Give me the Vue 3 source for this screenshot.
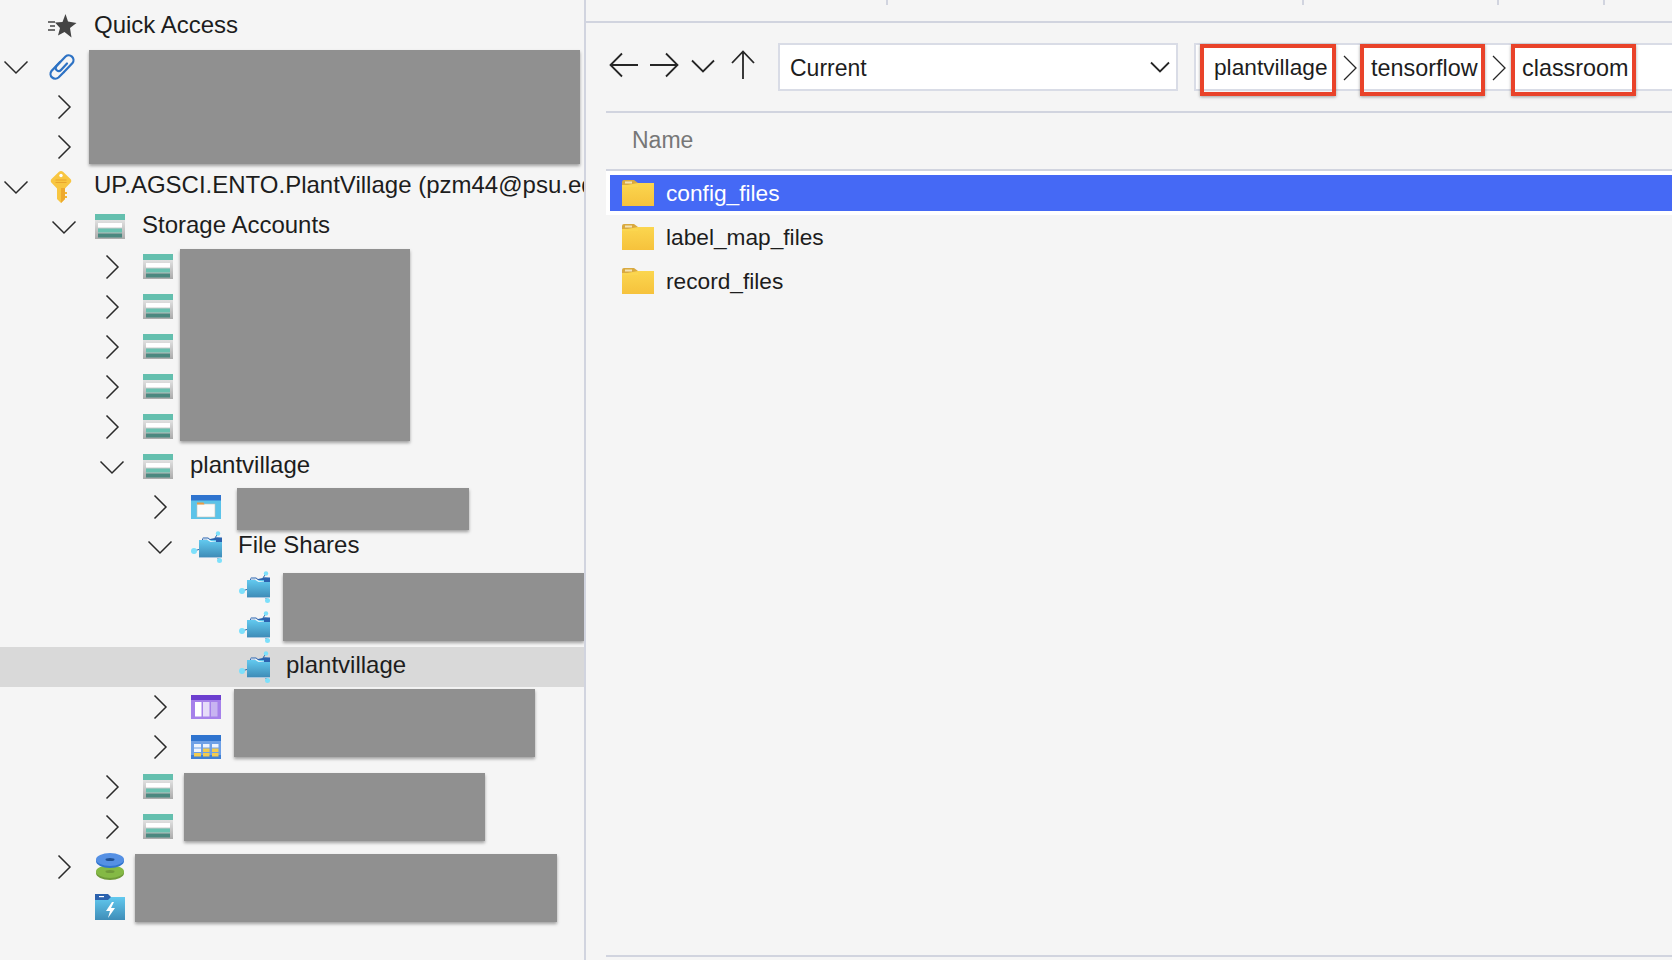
<script setup>
const rows = [
  { level: 0, icon: 'quick', label: 'Quick Access' },
  { level: 0, arrow: 'down', icon: 'link' },
  { level: 1, arrow: 'right' },
  { level: 1, arrow: 'right' },
  { level: 0, arrow: 'down', icon: 'key', label: 'UP.AGSCI.ENTO.PlantVillage (pzm44@psu.edu)' },
  { level: 1, arrow: 'down', icon: 'storage', label: 'Storage Accounts' },
  { level: 2, arrow: 'right', icon: 'storage' },
  { level: 2, arrow: 'right', icon: 'storage' },
  { level: 2, arrow: 'right', icon: 'storage' },
  { level: 2, arrow: 'right', icon: 'storage' },
  { level: 2, arrow: 'right', icon: 'storage' },
  { level: 2, arrow: 'down', icon: 'storage', label: 'plantvillage' },
  { level: 3, arrow: 'right', icon: 'blob' },
  { level: 3, arrow: 'down', icon: 'share', label: 'File Shares' },
  { level: 4, icon: 'share' },
  { level: 4, icon: 'share' },
  { level: 4, icon: 'share', label: 'plantvillage', active: true },
  { level: 3, arrow: 'right', icon: 'queue' },
  { level: 3, arrow: 'right', icon: 'table' },
  { level: 2, arrow: 'right', icon: 'storage' },
  { level: 2, arrow: 'right', icon: 'storage' },
  { level: 1, arrow: 'right', icon: 'disk' },
  { level: 1, icon: 'bolt' },
]

// grey blocks that hide account names in the screenshot
const masks = [
  { left: 89, top: 50, width: 491, height: 114 },
  { left: 180, top: 249, width: 230, height: 192 },
  { left: 237, top: 488, width: 232, height: 42 },
  { left: 283, top: 573, width: 301, height: 68 },
  { left: 234, top: 689, width: 301, height: 68 },
  { left: 184, top: 773, width: 301, height: 68 },
  { left: 135, top: 854, width: 422, height: 68 },
]

const folders = ['config_files', 'label_map_files', 'record_files']
const ticks = [886, 1302, 1497, 1603]
const crumbs = ['plantvillage', 'tensorflow', 'classroom']

const maskStyle = (m) => ({
  left: m.left + 'px',
  top: m.top + 'px',
  width: m.width + 'px',
  height: m.height + 'px',
})
</script>

<template>
  <div class="app">
    <svg class="defs" width="0" height="0">
      <defs>
        <linearGradient id="gStore" x1="0" y1="0" x2="0" y2="1">
          <stop offset="0" stop-color="#f2f2f2" />
          <stop offset="1" stop-color="#ababab" />
        </linearGradient>
        <linearGradient id="gShare" x1="0" y1="0" x2="0" y2="1">
          <stop offset="0" stop-color="#62c9ef" />
          <stop offset="1" stop-color="#3f8db8" />
        </linearGradient>
        <linearGradient id="gFolder" x1="0" y1="0" x2="0" y2="1">
          <stop offset="0" stop-color="#fbd64f" />
          <stop offset="1" stop-color="#f6c23c" />
        </linearGradient>
      </defs>

      <symbol id="i-quick" viewBox="0 0 32 32">
        <path d="M2 6.500h7M4 10.500h5M2 14.500h7" transform="translate(0 4.500)" stroke="#444" stroke-width="1.600" fill="none" />
        <path d="M19.500 3l2.500 7.500 8.500 1.500-6.500 5 1.500 9.500-7-5.500-6.500 3.500 2-7.500-5-5.500 7.500-.5z" fill="#444" />
      </symbol>
      <symbol id="i-link" viewBox="0 0 32 32">
        <path d="M18 21l8.500-9a4.800 4.800 0 0 0-7-6.500l-9 9.500a3 3 0 0 0 4.500 4l6-6.500" fill="none" stroke="#2d72c4" stroke-width="2.200" stroke-linecap="round" />
        <path d="M14 11l-8.500 9a4.800 4.800 0 0 0 7 6.500l5-5" fill="none" stroke="#2d72c4" stroke-width="2.200" stroke-linecap="round" />
      </symbol>
      <symbol id="i-key" viewBox="0 0 32 32">
        <path d="M13 .8c1.100-1 2.900-1 4 0l7.500 7.200c1 1 1 2.800 0 3.800L19 17.500V28l-4 4-4-4V17.500l-5.500-5.700c-1-1-1-2.800 0-3.800z" fill="#f8c641" />
        <path d="M15 17h4v11l-4 4z" fill="#eda92f" />
        <circle cx="15" cy="4.500" r="1.700" fill="#fff" />
        <path d="M9.500 9h11M9.500 11.500h11" stroke="#e8a52d" stroke-width="1" />
        <path d="M19 21h2v2h-2zM19 25h2v2h-2z" fill="#f3b637" />
      </symbol>
      <symbol id="i-storage" viewBox="0 0 32 32">
        <rect x="1" y="3" width="30" height="25" fill="url(#gStore)" />
        <rect x="1" y="3" width="30" height="6" fill="#64bfae" />
        <rect x="4" y="12" width="24" height="4.500" fill="#fff" />
        <rect x="4" y="17.500" width="24" height="4" fill="#69c1b0" />
        <rect x="4" y="22.500" width="24" height="4" fill="#4b8880" />
      </symbol>
      <symbol id="i-blob" viewBox="0 0 32 32">
        <rect x="1" y="4" width="30" height="24" fill="#5cc3e9" />
        <rect x="1" y="4" width="30" height="5.500" fill="#2f74cf" />
        <rect x="7" y="13" width="18" height="13" fill="#fbfbfb" stroke="#c4c4b8" stroke-width=".6" />
        <path d="M7 11.500h6.500l1 2H7z" fill="#e99b45" />
      </symbol>
      <symbol id="i-share" viewBox="0 0 32 32">
        <path d="M5.500 19.500l5-1.500M25 24l3.500 4M25 7l2.500-4" stroke="#2a66a8" stroke-width="1" />
        <path d="M12 8.500l1-2h5l2 1.500 7-1.500 4 .5v4H12z" fill="#2b62ae" />
        <path d="M10 9h23v17H10z" fill="url(#gShare)" transform="translate(-1 0)" />
        <path d="M13 7.500h5l3 2.500h8l-8.500 1L17 8.800h-4z" fill="#eef8fc" />
        <path d="M26 6.500h6V11h-6z" fill="#2b62ae" />
        <rect x="9" y="26" width="23" height="1" fill="#a9c6de" />
        <circle cx="4" cy="20" r="3" fill="#7de0fb" />
        <circle cx="28" cy="2.500" r="2.200" fill="#7de0fb" />
        <circle cx="29.500" cy="29.500" r="2.500" fill="#7de0fb" />
      </symbol>
      <symbol id="i-queue" viewBox="0 0 32 32">
        <rect x="1" y="4" width="30" height="24" fill="#a681ea" />
        <rect x="1" y="4" width="30" height="5" fill="#6c3ecf" />
        <rect x="5" y="11" width="6.500" height="14.500" fill="#fff" />
        <rect x="13" y="11" width="6.500" height="14.500" fill="#e6dcf9" />
        <rect x="21" y="11" width="6.500" height="14.500" fill="#c8b4f1" />
      </symbol>
      <symbol id="i-table" viewBox="0 0 32 32">
        <rect x="1" y="4" width="30" height="24" fill="#6ea0e6" />
        <rect x="1" y="4" width="30" height="6" fill="#2f74cf" />
        <path d="M1 24v4h30v-4z" fill="#3f7fd4" />
        <path d="M4 13h7v3.500H4zM13 13h6.500v3.500H13zM22 13h6.500v3.500H22zM4 17.500h7V21H4z" fill="#eef4fd" />
        <path d="M13 17.500h6.500V21H13zM22 17.500h6.500V21H22zM4 22h7v3.500H4zM13 22h6.500v3.500H13zM22 22h6.500v3.500H22z" fill="#f3cc4f" />
      </symbol>
      <symbol id="i-disk" viewBox="0 0 32 32">
        <ellipse cx="16" cy="22" rx="14" ry="7" fill="#6f9a3a" />
        <ellipse cx="16" cy="20.500" rx="14" ry="6.500" fill="#84b945" />
        <ellipse cx="16" cy="20.500" rx="4.500" ry="1.500" fill="#6f9a3a" />
        <ellipse cx="16" cy="10" rx="14" ry="7" fill="#2f74cf" />
        <ellipse cx="16" cy="8.500" rx="14" ry="6.500" fill="#5590e4" />
        <ellipse cx="16" cy="8.500" rx="4.500" ry="1.500" fill="#1f4f92" />
      </symbol>
      <symbol id="i-bolt" viewBox="0 0 32 32">
        <path d="M1 6h30v23H1z" fill="url(#gShare)" />
        <path d="M1 3h13l3 3-3 3H1z" fill="#2b62ae" />
        <rect x="5" y="5" width="5" height="1.200" fill="#fff" />
        <path d="M18 11l-6 9h4l-2 7 7-10h-4l3-6z" fill="#fff" />
      </symbol>
      <symbol id="i-folder" viewBox="0 0 32 26">
        <path d="M0 2a2 2 0 0 1 2-2h10l4 3h16v6H0z" fill="#d9a93f" />
        <rect x="3" y="1.500" width="7" height="2" fill="#f4e3b4" />
        <path d="M0 6l16-3h16v23H0z" fill="url(#gFolder)" />
        <rect y="5" width="16" height="2" fill="#fbd64f" />
      </symbol>
    </svg>

    <aside class="tree">
      <div v-for="(row, i) in rows" :key="i" class="row" :class="{ active: row.active }" :style="{ paddingLeft: row.level * 48 + 'px' }">
        <span class="arrow">
          <svg v-if="row.arrow" width="32" height="32" viewBox="0 0 32 32">
            <path v-if="row.arrow === 'right'" d="M10.500 4.500L22 16 10.500 27.500" />
            <path v-else d="M4.500 10.500L16 22l11.500-11.500" />
          </svg>
        </span>
        <svg v-if="row.icon" class="icon" width="32" height="32">
          <use :href="'#i-' + row.icon" />
        </svg>
        <span v-if="row.label" class="label">{{ row.label }}</span>
      </div>
      <div v-for="(m, i) in masks" :key="'m' + i" class="mask" :style="maskStyle(m)"></div>
    </aside>

    <main class="pane">
      <div class="tabs">
        <i v-for="t in ticks" :key="t" class="tick" :style="{ left: t - 586 + 'px' }"></i>
      </div>

      <div class="toolbar">
        <div class="nav">
          <svg width="30" height="26" viewBox="0 0 30 26"><path d="M29 13H2M13 1.500L1.500 13 13 24.500" /></svg>
          <svg width="30" height="26" viewBox="0 0 30 26"><path d="M1 13h27M17 1.500L28.500 13 17 24.500" /></svg>
          <svg class="nav-down" width="24" height="14" viewBox="0 0 24 14"><path d="M1 1.500L12 12.500 23 1.500" /></svg>
          <svg class="nav-up" width="24" height="30" viewBox="0 0 24 30"><path d="M12 29V2M1 13L12 1.500 23 13" /></svg>
        </div>
        <div class="select">
          <span>Current</span>
          <svg width="20" height="12" viewBox="0 0 20 12"><path d="M1 1.500L10 10.500 19 1.500" /></svg>
        </div>
        <div class="path">
          <template v-for="(c, i) in crumbs" :key="c">
            <svg v-if="i > 0" class="sep" :class="'sep' + i" width="14" height="26" viewBox="0 0 14 26"><path d="M1 1l12 12L1 25" /></svg>
            <span class="crumb" :class="'crumb' + i">{{ c }}</span>
          </template>
        </div>
      </div>

      <div class="list">
        <div class="head">Name</div>
        <div v-for="(f, i) in folders" :key="f" class="file" :class="{ selected: i === 0 }">
          <svg class="folder" width="32" height="26"><use href="#i-folder" /></svg>
          <span>{{ f }}</span>
        </div>
      </div>
    </main>
  </div>
</template>

<style scoped>
.app {
  display: flex;
  width: 1672px;
  height: 960px;
  overflow: hidden;
  background: #f5f5f5;
  font-family: "Liberation Sans", Arial, sans-serif;
  color: #1d1d1d;
}

.defs {
  position: absolute;
  top: 0;
  left: 0;
}

.tree {
  position: relative;
  flex: none;
  width: 584px;
  padding-top: 7px;
  box-sizing: border-box;
  overflow: hidden;
  font-size: 24px;
}

.row {
  display: flex;
  align-items: center;
  height: 40px;
  white-space: nowrap;
}

.row.active {
  background: #d9d9d9;
  width: 584px;
}

.arrow {
  flex: none;
  width: 47px;
  height: 32px;
}

.arrow svg {
  display: block;
}

.arrow path {
  fill: none;
  stroke: #2a2a2a;
  stroke-width: 1.5;
}

.icon {
  flex: none;
  margin: 0 16px 0 -1px;
}

.label {
  margin-top: -4px;
}

.mask {
  position: absolute;
  background: #909090;
  box-shadow: 0 2px 3px rgba(0, 0, 0, 0.35);
}

.pane {
  position: relative;
  flex: 1;
  display: flex;
  flex-direction: column;
  border-left: 2px solid #d1d4df;
}

.tabs {
  position: relative;
  height: 21px;
  border-bottom: 2px solid #d1d4df;
  flex: none;
}

.tick {
  position: absolute;
  top: 0;
  width: 2px;
  height: 5px;
  background: #d1d4df;
}

.toolbar {
  display: flex;
  align-items: flex-start;
  flex: none;
  height: 88px;
  box-sizing: border-box;
  padding: 20px 0 0 23px;
  font-size: 23px;
}

.nav {
  display: flex;
  align-items: center;
  width: 169px;
  height: 44px;
}

.nav svg {
  flex: none;
  margin-right: 10px;
}

.nav .nav-down {
  margin: 2px 16px 0 2px;
}

.nav .nav-up {
  margin: 0;
}

.nav path,
.select path,
.sep path {
  fill: none;
  stroke: #262626;
  stroke-width: 1.8;
}

.sep path {
  stroke-width: 1.3;
}

.select {
  display: flex;
  align-items: center;
  justify-content: space-between;
  width: 400px;
  height: 48px;
  box-sizing: border-box;
  padding: 0 6px 0 10px;
  background: #fff;
  border: 2px solid #d9dce6;
}

.select span {
  margin-top: 2px;
}

.path {
  position: relative;
  flex: 1;
  display: flex;
  align-items: flex-start;
  height: 48px;
  margin-left: 16px;
  padding-left: 4px;
  box-sizing: border-box;
  background: #fff;
  border: 2px solid #d9dce6;
  border-right: 0;
}

.sep {
  flex: none;
  margin: 10px 3px 0 7px;
}

.sep2 {
  margin-right: 5px;
}

.crumb {
  flex: none;
  box-sizing: border-box;
  height: 52px;
  margin-top: -1px;
  line-height: 40px;
  border: 4px solid #e9432a;
  box-shadow: 0 1px 3px rgba(0, 0, 0, 0.35);
  white-space: nowrap;
}

.crumb0 {
  width: 136px;
  padding-left: 10px;
  font-size: 22.7px;
  line-height: 38px;
}

.crumb1 {
  width: 125px;
  padding-left: 7px;
  font-size: 23.4px;
}

.crumb2 {
  width: 125px;
  padding-left: 7px;
  font-size: 23.4px;
}

.list {
  flex: 1;
  margin: 0 0 3px 20px;
  border-top: 2px solid #d1d4df;
  border-bottom: 2px solid #d1d4df;
  font-size: 22.7px;
}

.head {
  height: 58px;
  box-sizing: border-box;
  padding: 14px 0 0 26px;
  font-size: 23px;
  color: #777;
  border-bottom: 2px solid #d1d4df;
}

.file {
  display: flex;
  align-items: center;
  height: 44px;
  padding-left: 16px;
}

.file span {
  margin-left: 12px;
}

.file.selected {
  height: 36px;
  margin: 4px 0;
  margin-left: 4px;
  padding-left: 12px;
  background: #4569f5;
  color: #fff;
  outline: 4px solid #fff;
}
</style>

<style>
html,
body {
  margin: 0;
  background: #f5f5f5;
}
</style>
